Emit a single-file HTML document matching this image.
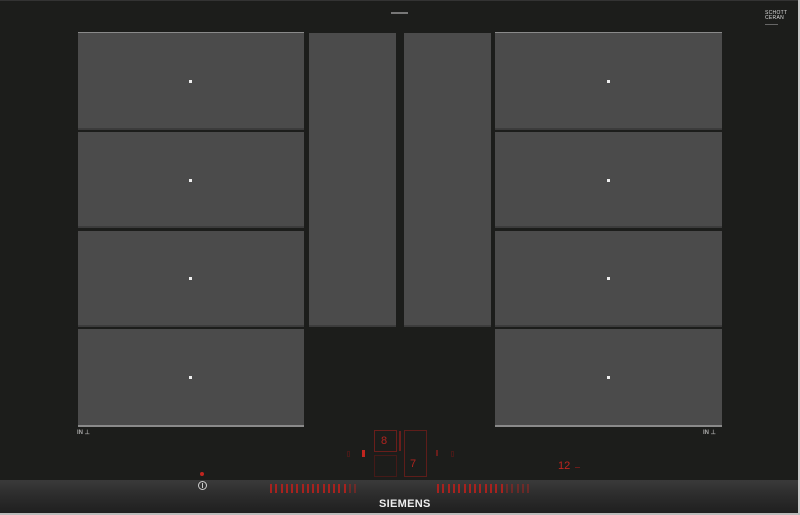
<!DOCTYPE html>
<html><head><style>
*{margin:0;padding:0;box-sizing:border-box}
body{width:800px;height:515px;background:#1c1d1b;position:relative;overflow:hidden;font-family:"Liberation Sans",sans-serif}
.z{position:absolute;background:#4b4b4b;border-bottom:2px solid #3c3c3c}
.d{position:absolute;width:3px;height:3px;background:#eee}
.r{position:absolute;color:#c0251f}
.tk{position:absolute;width:2px;height:9px;background:#a8221e}
.box{position:absolute;border:1px solid #6a1e1b}
</style></head><body>
<div style="position:absolute;left:0;top:0;width:800px;height:1px;background:#333"></div>
<div style="position:absolute;right:0;top:0;width:2px;height:515px;background:#c8c8c8"></div>
<div style="position:absolute;left:0;bottom:0;width:800px;height:2px;background:#bbb"></div>

<div class="z" style="left:78px;top:32px;width:226px;height:98px;border-top:1px solid #8a8a8a"></div>
<div class="z" style="left:78px;top:132px;width:226px;height:96px"></div>
<div class="z" style="left:78px;top:231px;width:226px;height:96px"></div>
<div class="z" style="left:78px;top:329px;width:226px;height:98px;border-bottom:2px solid #8a8a8a"></div>
<div class="z" style="left:495px;top:32px;width:227px;height:98px;border-top:1px solid #8a8a8a"></div>
<div class="z" style="left:495px;top:132px;width:227px;height:96px"></div>
<div class="z" style="left:495px;top:231px;width:227px;height:96px"></div>
<div class="z" style="left:495px;top:329px;width:227px;height:98px;border-bottom:2px solid #8a8a8a"></div>
<div class="z" style="left:309px;top:33px;width:87px;height:294px"></div>
<div class="z" style="left:404px;top:33px;width:87px;height:294px"></div>

<div class="d" style="left:189px;top:80px"></div>
<div class="d" style="left:189px;top:179px"></div>
<div class="d" style="left:189px;top:277px"></div>
<div class="d" style="left:189px;top:376px"></div>
<div class="d" style="left:607px;top:80px"></div>
<div class="d" style="left:607px;top:179px"></div>
<div class="d" style="left:607px;top:277px"></div>
<div class="d" style="left:607px;top:376px"></div>

<div style="position:absolute;left:391px;top:12px;width:17px;height:2px;background:#777"></div>
<div style="position:absolute;left:765px;top:11px;font-size:5px;line-height:5px;color:#ddd;letter-spacing:.3px">SCHOTT<br>CERAN</div>
<div style="position:absolute;left:765px;top:24px;width:13px;height:1px;background:#666"></div>

<div style="position:absolute;left:77px;top:429px;font-size:6px;color:#aaa;font-weight:bold">IN ⊥</div>
<div style="position:absolute;left:703px;top:429px;font-size:6px;color:#aaa;font-weight:bold">IN ⊥</div>

<div class="box" style="left:374px;top:430px;width:23px;height:22px"></div>
<div class="r" style="left:381px;top:433px;font-size:11px;line-height:16px;color:#b0241f">8</div>
<div class="box" style="left:374px;top:455px;width:23px;height:22px;border-color:#451a18"></div>
<div class="box" style="left:404px;top:430px;width:23px;height:47px;border-color:#5e1d1a"></div>
<div class="r" style="left:410px;top:458px;font-size:11px;color:#b0241f">7</div>
<div style="position:absolute;left:399px;top:431px;width:2px;height:20px;background:#6a1e1b"></div>
<div style="position:absolute;left:362px;top:450px;width:3px;height:7px;background:#c0251f"></div>
<div style="position:absolute;left:436px;top:450px;width:2px;height:6px;background:#6a1e1b"></div>
<div class="box" style="left:347px;top:451px;width:3px;height:6px;border-color:#451a18"></div>
<div class="box" style="left:451px;top:451px;width:3px;height:6px;border-color:#451a18"></div>

<div class="r" style="left:558px;top:460px;font-size:11px">12</div>
<div style="position:absolute;left:575px;top:467px;width:5px;height:1px;background:#6a1e1b"></div>

<div style="position:absolute;left:0;top:480px;width:798px;height:33px;background:linear-gradient(#3a3a3a,#2e2e2e 40%,#1f1f1f)"></div>
<div style="position:absolute;left:200px;top:472px;width:4px;height:4px;border-radius:50%;background:#c0251f"></div>
<div style="position:absolute;left:198px;top:481px;width:9px;height:9px;border-radius:50%;border:1px solid #ccc"></div>
<div style="position:absolute;left:202px;top:483px;width:1px;height:5px;background:#ccc"></div>
<div id="s1"></div>
<div style="position:absolute;left:379px;top:498px;font-size:11px;font-weight:bold;color:#eee;letter-spacing:.3px">SIEMENS</div>
<script>
var h='';
for(var i=0;i<17;i++){h+='<div class="tk" style="left:'+Math.round(270+i*5.25)+'px;top:484px;opacity:'+(i>14?.5:1)+'"></div>';}
for(var i=0;i<18;i++){h+='<div class="tk" style="left:'+Math.round(437+i*5.3)+'px;top:484px;opacity:'+(i>12?.5:1)+'"></div>';}
document.getElementById('s1').innerHTML=h;
</script>
</body></html>
